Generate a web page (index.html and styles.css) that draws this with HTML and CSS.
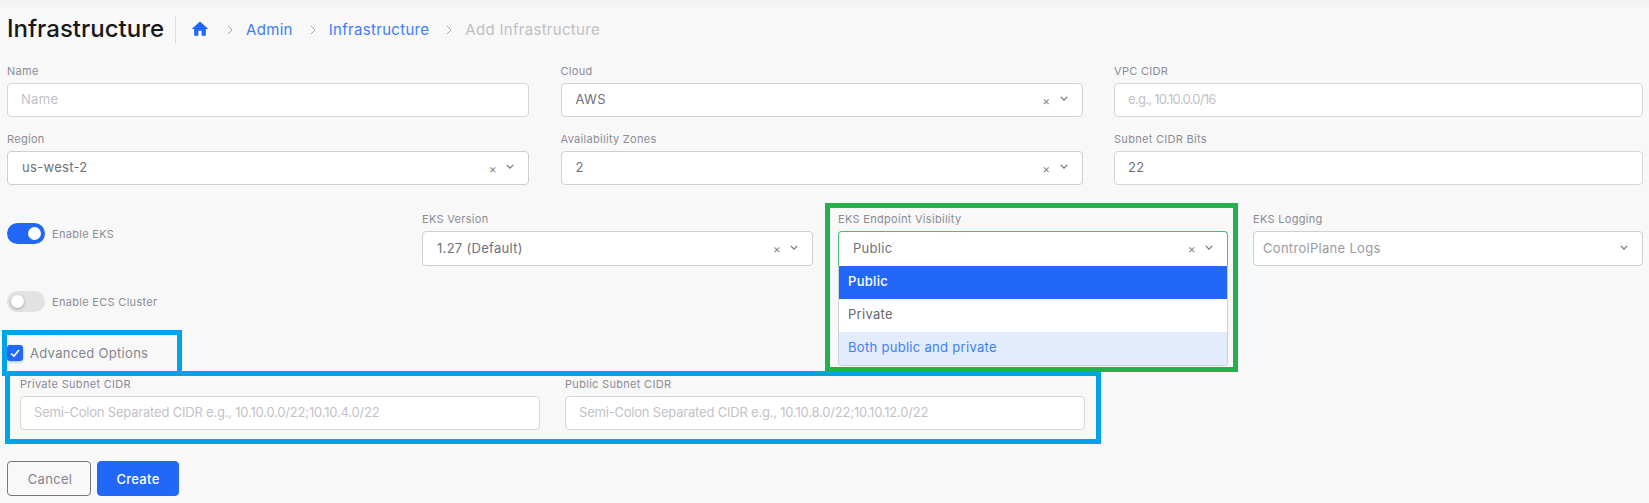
FILE: index.html
```html
<!DOCTYPE html>
<html lang="en">
  <head>
    <meta charset="UTF-8">
    <meta name="viewport" content="width=device-width, initial-scale=1.0">
    <title>Infrastructure - Add Infrastructure</title>
    <link rel="stylesheet" href="styles.css">
  </head>
<body>
  <div class="page">
    <header class="page-head">
      <h1>Infrastructure</h1>
      <nav class="crumbs">
        <svg class="home" viewBox="0 0 24 24"><path d="M10 20v-6h4v6h5v-8h3L12 3 2 12h3v8z"/></svg>
        <svg class="sep" viewBox="0 0 6 10"><polyline points="1,1 5,5 1,9"/></svg>
        <a href="#">Admin</a>
        <svg class="sep" viewBox="0 0 6 10"><polyline points="1,1 5,5 1,9"/></svg>
        <a href="#">Infrastructure</a>
        <svg class="sep" viewBox="0 0 6 10"><polyline points="1,1 5,5 1,9"/></svg>
        <span class="current">Add Infrastructure</span>
      </nav>
    </header>

    <form class="form">
      <div class="grid-top">
        <div class="field">
          <label>Name</label>
          <input type="text" placeholder="Name">
        </div>
        <div class="field">
          <label>Cloud</label>
          <div class="select">
            <span>AWS</span>
            <i class="clear">×</i>
            <svg class="chev" viewBox="0 0 10 6"><polyline points="1,1 5,5 9,1"/></svg>
          </div>
        </div>
        <div class="field">
          <label>VPC CIDR</label>
          <input type="text" class="tight" placeholder="e.g., 10.10.0.0/16">
        </div>
        <div class="field">
          <label>Region</label>
          <div class="select">
            <span>us-west-2</span>
            <i class="clear">×</i>
            <svg class="chev" viewBox="0 0 10 6"><polyline points="1,1 5,5 9,1"/></svg>
          </div>
        </div>
        <div class="field">
          <label>Availability Zones</label>
          <div class="select">
            <span>2</span>
            <i class="clear">×</i>
            <svg class="chev" viewBox="0 0 10 6"><polyline points="1,1 5,5 9,1"/></svg>
          </div>
        </div>
        <div class="field">
          <label>Subnet CIDR Bits</label>
          <input type="text" value="22">
        </div>
      </div>

      <div class="eks-row">
        <div class="toggles">
          <div class="toggle-row">
            <span class="toggle on"></span>
            <span>Enable EKS</span>
          </div>
          <div class="toggle-row">
            <span class="toggle"></span>
            <span>Enable ECS Cluster</span>
          </div>
        </div>
        <div class="field">
          <label>EKS Version</label>
          <div class="select">
            <span>1.27 (Default)</span>
            <i class="clear">×</i>
            <svg class="chev" viewBox="0 0 10 6"><polyline points="1,1 5,5 9,1"/></svg>
          </div>
        </div>
        <div class="field">
          <label>EKS Endpoint Visibility</label>
          <div class="select open">
            <span>Public</span>
            <i class="clear">×</i>
            <svg class="chev" viewBox="0 0 10 6"><polyline points="1,1 5,5 9,1"/></svg>
            <ul class="menu">
              <li class="selected">Public</li>
              <li>Private</li>
              <li class="hover">Both public and private</li>
            </ul>
          </div>
        </div>
        <div class="field">
          <label>EKS Logging</label>
          <div class="select muted">
            <span>ControlPlane Logs</span>
            <svg class="chev" viewBox="0 0 10 6"><polyline points="1,1 5,5 9,1"/></svg>
          </div>
        </div>
      </div>

      <div class="advanced">
        <span class="check">
          <svg viewBox="0 0 16 16"><polyline points="4,8.5 7,11 12,5"/></svg>
        </span>
        <span>Advanced Options</span>
      </div>

      <div class="subnets">
        <div class="field">
          <label>Private Subnet CIDR</label>
          <input type="text" class="cidr" placeholder="Semi-Colon Separated CIDR e.g., 10.10.0.0/22;10.10.4.0/22">
        </div>
        <div class="field">
          <label>Public Subnet CIDR</label>
          <input type="text" class="cidr" placeholder="Semi-Colon Separated CIDR e.g., 10.10.8.0/22;10.10.12.0/22">
        </div>
      </div>

      <div class="actions">
        <button type="button" class="btn">Cancel</button>
        <button type="button" class="btn primary">Create</button>
      </div>
    </form>

    <div class="mark green-box"></div>
    <div class="mark blue-check"></div>
    <div class="mark blue-subnets"></div>
  </div>
</body>
</html>
```

FILE: styles.css
```css
* {
  box-sizing: border-box;
}

body {
  margin: 0;
  background: #f8f8f8;
  font-family: 'Inter', sans-serif;
  color: #6f6f7c;
}

.page {
  position: relative;
  height: 503px;
  padding: 0 6px 0 7px;
  overflow: hidden;
  background: linear-gradient(#f1f1f1, #f8f8f8 10px);
}

.page-head {
  display: flex;
  align-items: center;
  height: 58px;
}

h1 {
  margin: 0;
  padding-right: 11px;
  height: 27px;
  line-height: 26px;
  border-right: 1px solid #dcdce0;
  font-size: 24px;
  font-weight: 500;
  color: #17171c;
}

.crumbs {
  display: flex;
  align-items: center;
  margin-left: 14px;
  font-size: 15px;
  letter-spacing: 0.3px;
  color: #c0c0c6;
}

.crumbs a {
  color: #3f7ef7;
  text-decoration: none;
}

.home {
  width: 20px;
  height: 20px;
  fill: #2168f9;
}

.sep {
  width: 6px;
  height: 10px;
  margin: 1px 13px 0 17px;
  fill: none;
  stroke: #aaa;
  stroke-width: 1;
}

.grid-top {
  display: grid;
  grid-template-columns: 522px 522px 529px;
  column-gap: 31.5px;
  row-gap: 16px;
  margin-top: 7px;
}

.field label {
  display: block;
  height: 12px;
  margin-bottom: 6px;
  line-height: 12px;
  font-size: 11px;
  letter-spacing: 0.3px;
  color: #8c8c96;
}

input,
.select {
  display: block;
  width: 100%;
  height: 34px;
  padding: 0 14px 2px 13px;
  border: 1px solid #d6d6dc;
  border-radius: 4px;
  background: #fff;
  font-family: inherit;
  font-size: 13px;
  letter-spacing: 0.3px;
  color: #6f6f7c;
  outline: none;
}

input::placeholder {
  color: #c2c2c9;
}

input.cidr {
  letter-spacing: -0.2px;
}

input.tight {
  letter-spacing: -0.7px;
}

.select {
  position: relative;
  display: flex;
  align-items: center;
  padding-left: 14px;
  border-color: #cfcfd3;
}

.select > span {
  flex: 1;
}

.clear {
  margin-right: 9px;
  margin-top: 2px;
  font-style: normal;
  font-size: 12px;
  color: #8a8a92;
}

.chev {
  width: 8px;
  height: 5px;
  margin-top: -1px;
  fill: none;
  stroke: #74747c;
  stroke-width: 1.6;
}

.eks-row {
  display: grid;
  grid-template-columns: 391px 390px 390px;
  justify-content: end;
  column-gap: 25px;
  margin-top: 28px;
  height: 132px;
  position: relative;
}

.eks-row .select {
  height: 35px;
}

.select.muted > span {
  color: #9a9aa2;
  margin-left: -5px;
}

.select.open {
  border-color: #46c076;
  border-bottom-color: transparent;
  border-radius: 4px 4px 0 0;
}

.menu {
  position: absolute;
  left: -1px;
  right: -1px;
  top: 34px;
  z-index: 2;
  margin: 0;
  padding: 0;
  list-style: none;
  background: #fff;
  border: 1px solid #cfcfd3;
  border-top: 0;
  border-radius: 0 0 4px 4px;
  font-size: 13px;
  color: #66666e;
  overflow: hidden;
}

.menu li {
  height: 33px;
  padding-left: 9px;
  line-height: 31px;
}

.menu .selected {
  background: #2168f9;
  color: #fff;
  font-weight: 500;
}

.menu .hover {
  background: #e2ecfc;
  color: #3f7ef7;
}

.toggles {
  position: absolute;
  left: 0;
  top: 10px;
  display: flex;
  flex-direction: column;
  gap: 47px;
}

.toggle-row {
  display: flex;
  align-items: center;
  gap: 7px;
  font-size: 11px;
  letter-spacing: 0.3px;
  color: #8c8c96;
}

.toggle {
  position: relative;
  width: 38px;
  height: 21px;
  border-radius: 11px;
  background: #e2e2e2;
}

.toggle::after {
  content: "";
  position: absolute;
  left: 4px;
  top: 4px;
  width: 13px;
  height: 13px;
  border-radius: 50%;
  background: #fff;
  box-shadow: 0 1px 3px rgba(0, 0, 0, 0.3);
}

.toggle.on {
  background: #2168f9;
}

.toggle.on::after {
  left: 21px;
  box-shadow: none;
}

.advanced {
  display: flex;
  align-items: center;
  gap: 7px;
  height: 16px;
  font-size: 13px;
  letter-spacing: 0.3px;
  color: #85858f;
}

.check {
  width: 16px;
  height: 16px;
  border-radius: 3px;
  background: #2168f9;
  box-shadow: 0 1px 3px rgba(33, 104, 249, 0.4);
}

.check svg {
  display: block;
  fill: none;
  stroke: #fff;
  stroke-width: 1.6;
}

.subnets {
  display: grid;
  grid-template-columns: 520px 520px;
  column-gap: 25px;
  margin-top: 17px;
  padding-left: 13px;
}

.actions {
  display: flex;
  gap: 6px;
  margin-top: 31px;
}

.btn {
  width: 84px;
  height: 35px;
  padding-left: 8px;
  border: 1px solid #77777f;
  border-radius: 4px;
  background: transparent;
  font-family: inherit;
  font-size: 13px;
  letter-spacing: 0.3px;
  color: #85858f;
}

.btn.primary {
  width: 82px;
  padding-left: 6px;
  border-color: #2168f9;
  background: #2168f9;
  color: #fff;
  font-weight: 500;
}

.mark {
  position: absolute;
  z-index: 3;
  border: 5px solid #00a2e8;
  pointer-events: none;
}

.green-box {
  left: 825px;
  top: 203px;
  width: 413px;
  height: 169px;
  border-color: #22b14c;
}

.blue-check {
  left: 2px;
  top: 330px;
  width: 180px;
  height: 46px;
}

.blue-subnets {
  left: 5px;
  top: 371px;
  width: 1096px;
  height: 73px;
}
```
